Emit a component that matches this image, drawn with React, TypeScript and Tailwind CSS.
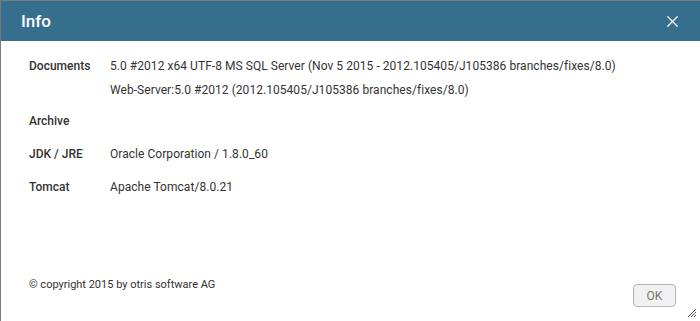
import { X } from "lucide-react";

const rows: { label: string; values: string[] }[] = [
  {
    label: "Documents",
    values: [
      "5.0 #2012 x64 UTF-8 MS SQL Server (Nov 5 2015 - 2012.105405/J105386 branches/fixes/8.0)",
      "Web-Server:5.0 #2012 (2012.105405/J105386 branches/fixes/8.0)",
    ],
  },
  { label: "Archive", values: [] },
  { label: "JDK / JRE", values: ["Oracle Corporation / 1.8.0_60"] },
  { label: "Tomcat", values: ["Apache Tomcat/8.0.21"] },
];

export default function App() {
  return (
    <div
      className="relative flex flex-col w-[700px] h-[321px] bg-white border-t border-l border-[#7a7a7a] text-[#333] text-[12px]"
      style={{ fontFamily: "Roboto, 'Liberation Sans', sans-serif" }}
    >
      {/* Title bar */}
      <div className="flex justify-between items-center pl-[20px] pr-[18px] h-[40px] bg-[#366e8e] text-white shrink-0">
        <span className="font-medium text-[17px] mt-[1px]">Info</span>
        <X size={19} strokeWidth={1.6} />
      </div>

      {/* Info rows */}
      <div className="flex flex-col pt-[13px] px-[28px]">
        {rows.map((row, i) => (
          <div key={row.label} className={`flex ${i === 0 ? "mb-[7px]" : "mb-[9px]"}`}>
            <div className="w-[81px] font-medium leading-[24px] shrink-0">{row.label}</div>
            <div className="flex flex-col">
              {row.values.length === 0 ? (
                <span className="leading-[24px]">&nbsp;</span>
              ) : (
                row.values.map((v) => (
                  <span key={v} className="leading-[24px] tracking-[0.05px]">
                    {v}
                  </span>
                ))
              )}
            </div>
          </div>
        ))}
      </div>

      <div className="flex-1" />

      {/* Footer */}
      <div className="flex justify-between items-start pl-[28px] pr-[24px] h-[45px]">
        <span className="leading-[16px] text-[11px] mt-[1px]">© copyright 2015 by otris software AG</span>
        <button className="mt-[8px] w-[43px] h-[23px] rounded-[4px] border border-[#b5b5b5] bg-[#f1f1f1] text-[#777] text-[12px]">
          OK
        </button>
      </div>

      {/* Resize grip */}
      <svg className="absolute right-[3px] bottom-[3px]" width="10" height="10" viewBox="0 0 10 10">
        <path d="M9 1L1 9M9 4L4 9M9 7L7 9" stroke="#555" strokeWidth="1" />
      </svg>
    </div>
  );
}
